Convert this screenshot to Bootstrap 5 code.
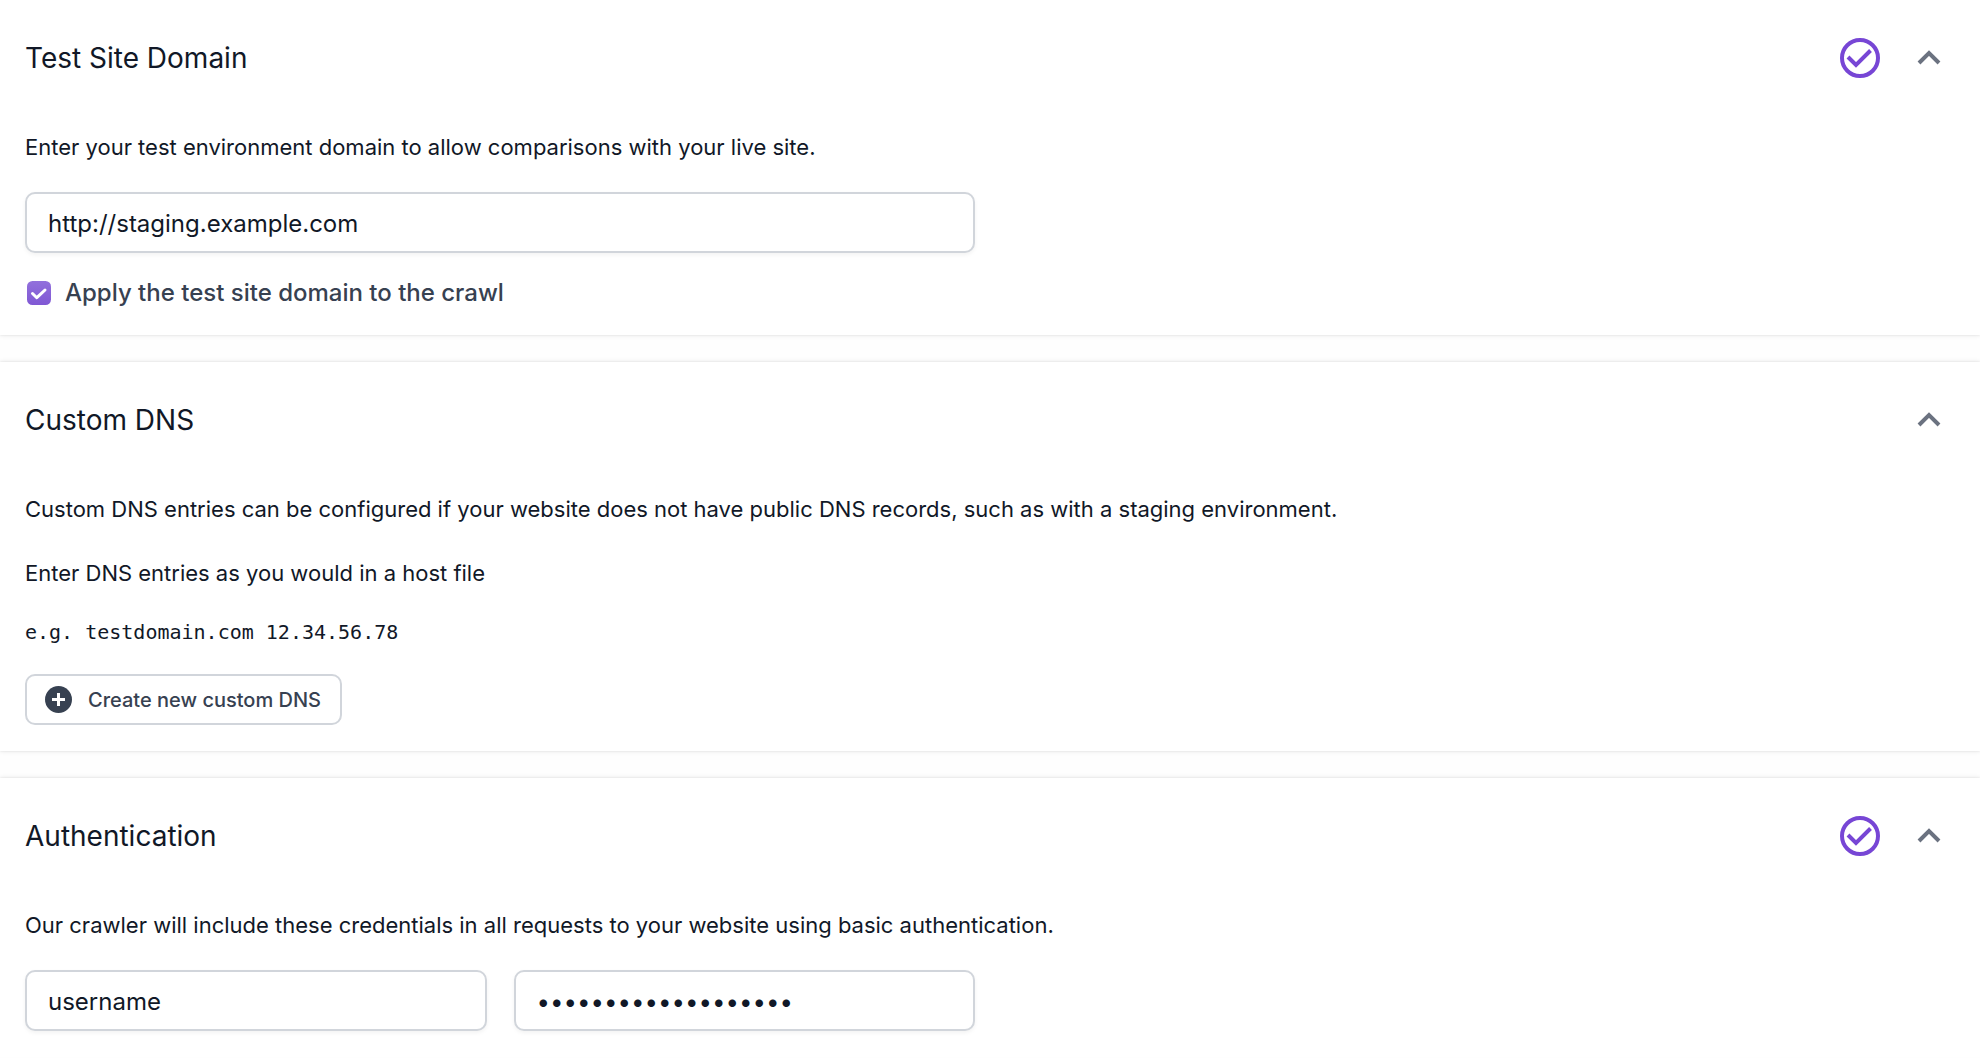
<!DOCTYPE html>
<html lang="en">
<head>
<meta charset="utf-8">
<meta name="viewport" content="width=device-width, initial-scale=1">
<title>Crawl settings</title>
<link href="https://cdn.jsdelivr.net/npm/bootstrap@5.3.0/dist/css/bootstrap.min.css" rel="stylesheet">
<style>
  body { font-family: Inter, "Liberation Sans", sans-serif; font-size: 22px; line-height: 32px; color: #111827; background: #fefefe; overflow-x: hidden; }
  .panel-stack { gap: 27px; }
  .panel { background: #fff; padding: 24px 28px 26px 25px; box-shadow: 0 0 5px rgba(0,0,0,.1), 0 0 2px rgba(0,0,0,.08); }
  .panel-title { font-size: 28px; line-height: 40px; font-weight: 400; }
  .panel-head { min-height: 68px; margin-bottom: 39px; padding-right: 11px; gap: 37px; }
  .toggle-btn { color: #6b7280; line-height: 0; }
  .half-grid { --bs-gutter-x: 27px; }
  .field { height: 61px; padding: 2px 21px 0; border: 2px solid #d1d5db; border-radius: 10px; font-size: 24px; color: #111827; box-shadow: 0 2px 4px rgba(0,0,0,.05); }
  .intro { margin-bottom: 29px; }
  .tick { width: 24px; height: 24px; border: 0; border-radius: 6px; margin: 0 14px 0 2px; }
  .tick:checked { background-color: #855cd6; background-image: url("data:image/svg+xml,%3Csvg xmlns='http://www.w3.org/2000/svg' viewBox='0 0 24 24'%3E%3Cpath d='M5.5 12.5l4.3 4.2L18 9' fill='none' stroke='%23fff' stroke-width='3' stroke-linecap='round' stroke-linejoin='round'/%3E%3C/svg%3E"), linear-gradient(#9270dc, #8058d4); }
  .tick-label { font-size: 24px; font-weight: 500; color: #374151; }
  .sample { font-family: "DejaVu Sans Mono", monospace; font-size: 20px; line-height: 28px; margin-bottom: 28px; }
  .add-btn { height: 51px; padding: 0 19px 0 18px; gap: 16px; border: 2px solid #d1d5db; border-radius: 10px; font-size: 20px; font-weight: 500; color: #374151; }
</style>
<script src="https://cdn.jsdelivr.net/npm/bootstrap@5.3.0/dist/js/bootstrap.bundle.min.js"></script>
</head>
<body>
<svg class="d-none" aria-hidden="true">
  <symbol id="done" viewBox="0 0 40 40"><circle cx="20" cy="20" r="18" fill="none" stroke="#7746d5" stroke-width="4"/><path d="M8 19l8 8L30.500 12.500" fill="none" stroke="#7746d5" stroke-width="4"/></symbol>
  <symbol id="up" viewBox="0 0 24 16"><path d="M2 13L12 3l10 10" fill="none" stroke="currentColor" stroke-width="4"/></symbol>
</svg>
<main class="panel-stack d-flex flex-column">
  <section class="panel">
    <div class="panel-head d-flex align-items-center">
      <h2 class="panel-title mb-0 me-auto">Test Site Domain</h2>
      <svg width="40" height="40" role="img" aria-label="Complete"><use href="#done"/></svg>
      <button type="button" class="btn toggle-btn p-0 border-0" data-bs-toggle="collapse" data-bs-target="#domain" aria-label="Toggle test site domain"><svg width="24" height="16"><use href="#up"/></svg></button>
    </div>
    <div id="domain" class="collapse show">
      <label class="intro d-block" for="url">Enter your test environment domain to allow comparisons with your live site.</label>
      <div class="row half-grid"><div class="col-6"><input id="url" class="form-control field" type="text" value="http://staging.example.com"></div></div>
      <div class="d-flex align-items-center mt-4">
        <input id="apply" class="form-check-input tick" type="checkbox" checked>
        <label class="tick-label" for="apply">Apply the test site domain to the crawl</label>
      </div>
    </div>
  </section>

  <section class="panel">
    <div class="panel-head d-flex align-items-center">
      <h2 class="panel-title mb-0 me-auto">Custom DNS</h2>
      <button type="button" class="btn toggle-btn p-0 border-0" data-bs-toggle="collapse" data-bs-target="#dns" aria-label="Toggle custom DNS"><svg width="24" height="16"><use href="#up"/></svg></button>
    </div>
    <div id="dns" class="collapse show">
      <p class="mb-0">Custom DNS entries can be configured if your website does not have public DNS records, such as with a staging environment.</p>
      <p class="intro mt-4 pt-2">Enter DNS entries as you would in a host file</p>
      <p class="sample">e.g. testdomain.com 12.34.56.78</p>
      <button type="button" class="btn add-btn d-inline-flex align-items-center bg-white">
        <svg width="27" height="27" viewBox="0 0 27 27" aria-hidden="true"><circle cx="13.500" cy="13.500" r="13.500" fill="#374151"/><path d="M13.500 7v13M7 13.500h13" stroke="#fff" stroke-width="3"/></svg>
        Create new custom DNS
      </button>
    </div>
  </section>

  <section class="panel">
    <div class="panel-head d-flex align-items-center">
      <h2 class="panel-title mb-0 me-auto">Authentication</h2>
      <svg width="40" height="40" role="img" aria-label="Complete"><use href="#done"/></svg>
      <button type="button" class="btn toggle-btn p-0 border-0" data-bs-toggle="collapse" data-bs-target="#auth" aria-label="Toggle authentication"><svg width="24" height="16"><use href="#up"/></svg></button>
    </div>
    <div id="auth" class="collapse show">
      <p class="intro">Our crawler will include these credentials in all requests to your website using basic authentication.</p>
      <div class="row half-grid"><div class="col-6"><div class="row half-grid">
        <div class="col-6"><input class="form-control field" type="text" value="username" aria-label="Username"></div>
        <div class="col-6"><input class="form-control field" type="password" value="examplepassword1234" aria-label="Password"></div>
      </div></div></div>
    </div>
  </section>
</main>
</body>
</html>
